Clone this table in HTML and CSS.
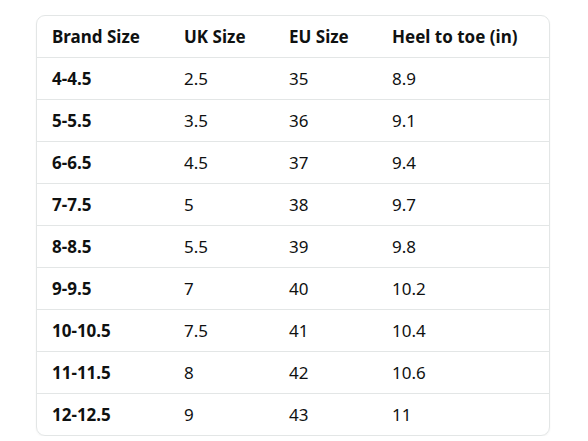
FILE: index.html
```html
<!DOCTYPE html>
<html lang="en">
<head>
<meta charset="utf-8">
<title>Size chart</title>
<link rel="stylesheet" href="styles.css">
</head>
<body>
<div class="card">
<table class="sizes">
<colgroup><col class="c1"><col class="c2"><col class="c3"><col class="c4"></colgroup>
<thead>
<tr><th>Brand Size</th><th>UK Size</th><th>EU Size</th><th>Heel to toe (in)</th></tr>
</thead>
<tbody>
<tr><th>4-4.5</th><td>2.5</td><td>35</td><td>8.9</td></tr>
<tr><th>5-5.5</th><td>3.5</td><td>36</td><td>9.1</td></tr>
<tr><th>6-6.5</th><td>4.5</td><td>37</td><td>9.4</td></tr>
<tr><th>7-7.5</th><td>5</td><td>38</td><td>9.7</td></tr>
<tr><th>8-8.5</th><td>5.5</td><td>39</td><td>9.8</td></tr>
<tr><th>9-9.5</th><td>7</td><td>40</td><td>10.2</td></tr>
<tr><th>10-10.5</th><td>7.5</td><td>41</td><td>10.4</td></tr>
<tr><th>11-11.5</th><td>8</td><td>42</td><td>10.6</td></tr>
<tr><th>12-12.5</th><td>9</td><td>43</td><td>11</td></tr>
</tbody>
</table>
</div>
</body>
</html>
```
FILE: styles.css
```css
html, body {
  margin: 0;
  padding: 0;
  background: #ffffff;
}
body {
  font-family: "Noto Sans", "Open Sans", sans-serif;
  color: #0f1111;
  padding: 15px 0 0 36px;
}
.card {
  width: 512px;
  border: 1px solid #e3e6e6;
  border-radius: 9px;
  overflow: hidden;
  box-shadow: 0 1px 2px rgba(0,0,0,0.05);
}
.sizes {
  width: 100%;
  border-collapse: collapse;
  table-layout: fixed;
  font-size: 17px;
}
.c1 { width: 132px; }
.c2 { width: 105px; }
.c3 { width: 103px; }
.c4 { width: auto; }
.sizes th, .sizes td {
  height: 41px;
  padding: 0 0 0 15px;
  text-align: left;
  vertical-align: middle;
  line-height: 20px;
  white-space: nowrap;
}
.sizes th { font-weight: 700; }
.sizes td { font-weight: 400; }
.sizes tbody tr th, .sizes tbody tr td {
  border-top: 1px solid #e3e6e6;
}
```
